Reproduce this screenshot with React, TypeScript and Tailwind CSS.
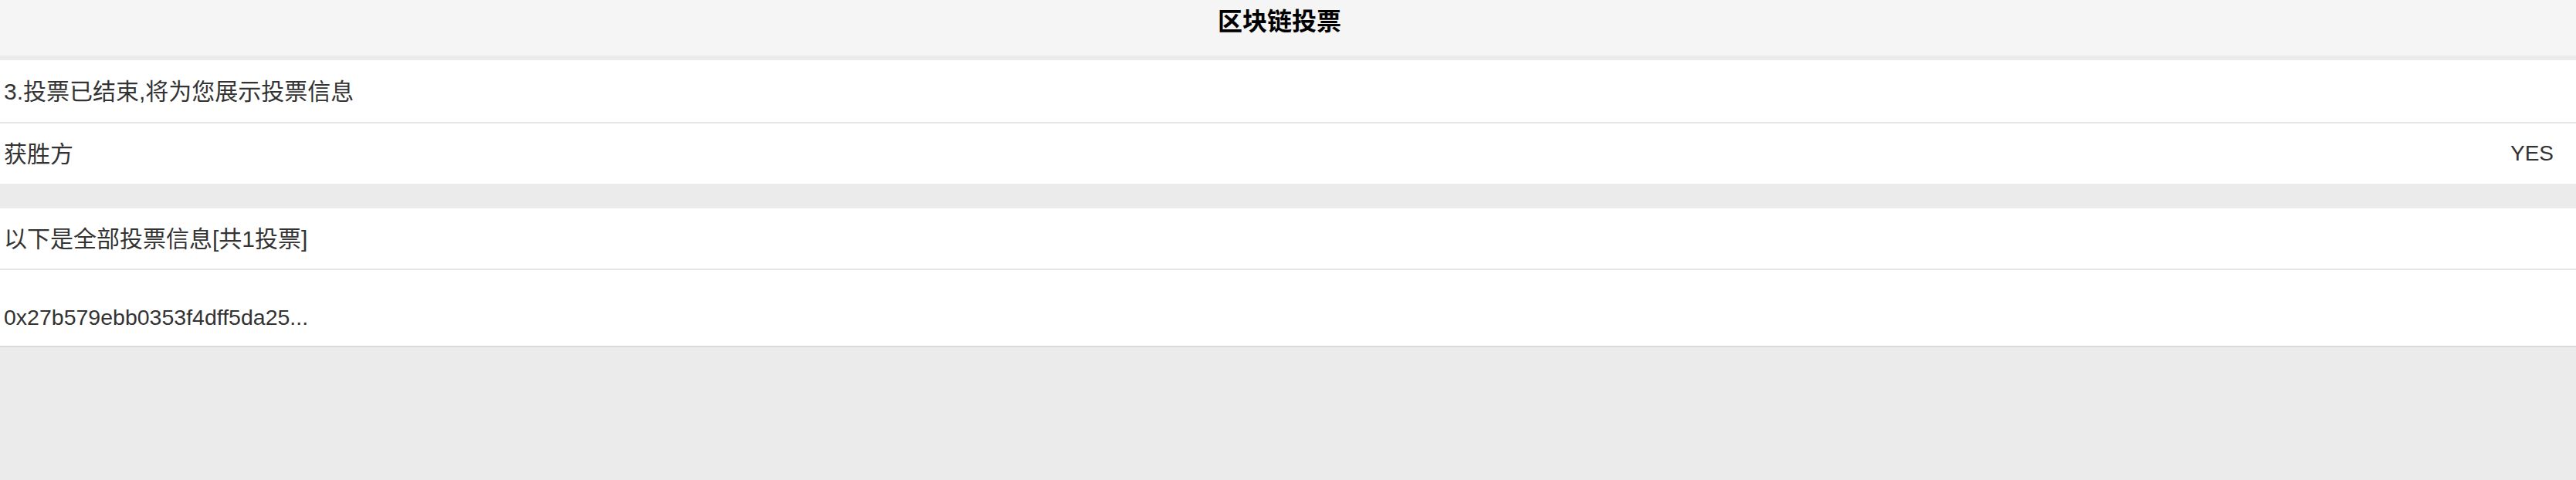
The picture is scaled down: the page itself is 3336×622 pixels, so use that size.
import React from 'react';

const font = "font-['Liberation_Sans','Noto_Sans_CJK_SC',sans-serif]";

const votes = ['0x27b579ebb0353f4dff5da25...'];

export default function App() {
  return (
    <div className={`min-h-[622px] bg-[#ebebeb] text-[#333] ${font}`}>
      {/* Header */}
      <div className="h-[78px] bg-[#f5f5f5] border-b-[6px] border-[#ebebeb] flex justify-center pt-[12px] pr-[22px]">
        <h1 className="text-[32px] leading-[32px] font-bold text-black">区块链投票</h1>
      </div>

      {/* Result */}
      <div className="bg-white">
        <div className="h-[82px] flex items-center px-[5px] border-b-2 border-[#e5e5e5] text-[30px]">
          3.投票已结束,将为您展示投票信息
        </div>
        <div className="h-[78px] flex items-center justify-between pl-[5px] pr-[29px] text-[30px]">
          <span>获胜方</span>
          <span className="text-[28px]">YES</span>
        </div>
      </div>

      <div className="h-[32px]" />

      {/* Votes list */}
      <div className="bg-white">
        <div className="h-[80px] flex items-center px-[5px] border-b-2 border-[#e5e5e5] text-[30px]">
          以下是全部投票信息[共{votes.length}投票]
        </div>
        {votes.map(v => (
          <div key={v} className="h-[100px] pt-[46px] px-[5px] border-b-2 border-[#dadada] text-[28.5px] leading-[30px]">
            {v}
          </div>
        ))}
      </div>
    </div>
  );
}
